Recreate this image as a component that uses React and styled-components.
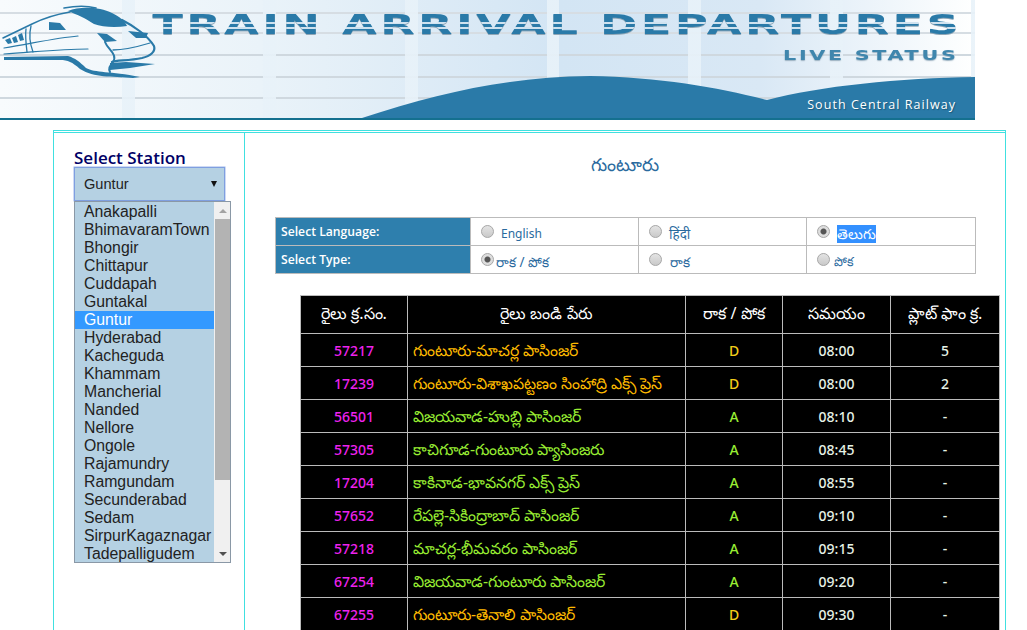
import React from "react";
import styled, { createGlobalStyle } from "styled-components";

const Global = createGlobalStyle`
  html, body { margin: 0; padding: 0; background: #fff; height: 630px; overflow: hidden; }
  #root { height: 630px; overflow: hidden; }
  * { box-sizing: border-box; }
`;

const Banner = styled.header`
  position: relative;
  width: 975px;
  height: 120px;
  border-bottom: 2px solid #14708f;
  overflow: hidden;
  background:
    repeating-linear-gradient(90deg, transparent 0 122px, rgba(232,242,249,.9) 122px 135px, transparent 135px 141.5px),
    linear-gradient(180deg, transparent 0 12px, #d6dde3 12px 14px, transparent 14px 32px, #d6dde3 32px 34px, transparent 34px 54px, #cfd8df 54px 56px, transparent 56px 76px, #cfd8df 76px 78px, transparent 78px 97px, #cfd8df 97px 99px, transparent 99px),
    linear-gradient(90deg, #f8fbfd 0, #eaf3f9 260px, #d3e5f4 560px, #d9e8f5 760px, #fbfdfe 955px, #fff 975px);
`;

const Wave = styled.svg`
  position: absolute;
  left: 0;
  top: 0;
  width: 975px;
  height: 118px;
`;

const Logo = styled.svg`
  position: absolute;
  left: 0;
  top: 0;
  width: 165px;
  height: 82px;
`;

const Titles = styled.div`
  position: relative;
  height: 118px;
  padding: 10px 17px 0 0;
  display: flex;
  flex-direction: column;
  align-items: flex-end;
`;

const MainTitle = styled.div`
  font: bold 26px/30px "DejaVu Sans", sans-serif;
  letter-spacing: 1.9px;
  margin-right: -4px;
  white-space: nowrap;
  color: transparent;
  background: linear-gradient(180deg, #2a7aa8 0 12px, #cfe2ef 12px 14px, #2a7aa8 14px 17px, #cfe2ef 17px 19px, #2a7aa8 19px);
  -webkit-background-clip: text;
  background-clip: text;
  filter: drop-shadow(0 1px 0 #8fa6b6);
  transform: scaleX(1.73);
  transform-origin: right center;
`;

const SubTitle = styled.div`
  font: bold 14px/16px "DejaVu Sans", sans-serif;
  letter-spacing: 1.8px;
  margin: 7px 0 0 0;
  color: #3f86ad;
  text-shadow: 0 1px 1px #9ab0c0;
  white-space: nowrap;
  transform: scaleX(1.48);
  transform-origin: right center;
`;

const Railway = styled.div`
  font: 500 12.5px/16px "Open Sans", sans-serif;
  letter-spacing: 1.05px;
  color: #fff;
  text-shadow: 1px 1px 1px #1c5878;
  margin: 34px 2px 0 0;
  white-space: nowrap;
`;

const Frame = styled.main`
  display: flex;
  width: 953px;
  height: 520px;
  margin: 10px 0 0 53px;
  border: 1px solid #40e0e0;
  border-top: 3px double #40e0e0;
  border-bottom: 0;
`;

const Side = styled.aside`
  width: 191px;
  flex: none;
  border-right: 1px solid #40e0e0;
  padding: 16px 0 0 20px;
`;

const SideLabel = styled.div`
  font: 600 17px/18px "Open Sans", sans-serif;
  color: #000066;
`;

const Dropdown = styled.div`
  display: flex;
  align-items: center;
  justify-content: space-between;
  width: 151px;
  height: 34px;
  padding: 0 7px 0 9px;
  background: #b5d1e3;
  border: 1px solid #7f9fe0;
  box-shadow: 0 0 0 .5px #9db6ea;
  font: 14.6px "Liberation Sans", sans-serif;
  color: #222;
`;

const Caret = styled.span`
  width: 0;
  height: 0;
  border-left: 3.5px solid transparent;
  border-right: 3.5px solid transparent;
  border-top: 6px solid #111;
`;

const Listbox = styled.div`
  display: flex;
  width: 157px;
  height: 362px;
  border: 1px solid #8a98a6;
  background: #b5d1e3;
  overflow: hidden;
`;

const Options = styled.div`
  width: 139px;
  flex: none;
  padding-top: 1px;
`;

const Option = styled.div`
  height: 18px;
  padding-left: 9px;
  font: 15.8px/18px "Liberation Sans", sans-serif;
  color: ${p => (p.$selected ? "#fff" : "#222")};
  background: ${p => (p.$selected ? "#3399ff" : "transparent")};
  white-space: nowrap;
`;

const ScrollBar = styled.div`
  width: 17px;
  flex: none;
  display: flex;
  flex-direction: column;
  background: #f0f0f0;
`;

const Arrow = styled.div`
  height: 17px;
  display: flex;
  align-items: center;
  justify-content: center;
  &::after {
    content: "";
    border-left: 4px solid transparent;
    border-right: 4px solid transparent;
    ${p => p.$up ? "border-bottom: 4px solid #a3a3a3;" : "border-top: 4px solid #505050;"}
  }
`;

const Thumb = styled.div`
  height: 261px;
  margin: 0 1px;
  background: #b3b3b3;
`;

const Track = styled.div`
  flex: 1;
`;

const Content = styled.section`
  flex: 1;
  padding-top: 19px;
`;

const Heading = styled.h2`
  margin: 0 0 41px;
  height: 24px;
  text-align: center;
  font: 400 17.8px/24px "Noto Sans", "DejaVu Sans", sans-serif;
  color: #2a6a9e;
`;

const OptionTable = styled.table`
  margin-left: 30px;
  width: 700px;
  height: 57px;
  border-collapse: collapse;
  table-layout: fixed;
  font: 12px "Noto Sans", "DejaVu Sans", sans-serif;
  color: #2a6a9e;
  td { border: 1px solid #bbb; height: 28px; padding: 0 0 0 10px; white-space: nowrap; }
`;

const LabelCell = styled.td`
  && {
    background: #2e7fad;
    color: #fff;
    padding-left: 5px;
    font: 600 12.2px "Open Sans", sans-serif;
  }
`;

const RadioWrap = styled.span`
  display: flex;
  align-items: center;
  gap: ${p => p.$gap}px;
`;

const Radio = styled.span`
  flex: none;
  width: 13px;
  height: 13px;
  border-radius: 50%;
  border: 1px solid #a8a8a8;
  background: ${p => p.$checked
    ? "radial-gradient(circle, #555 0 2.5px, #ddd 3.5px)"
    : "linear-gradient(180deg, #e4e4e4, #c9c9c9)"};
`;

const OptionText = styled.span`
  font-size: ${p => p.$size || 12}px;
  line-height: 18px;
  margin-top: 4px;
  ${p => p.$selected && "background: #3390ff; color: #fff;"}
`;

const DataWrap = styled.div`
  margin: 21px 0 0 55px;
`;

const DataTable = styled.table`
  width: 699px;
  border-collapse: collapse;
  table-layout: fixed;
  background: #000;
  text-align: center;
  font: 500 14px "Noto Sans", "DejaVu Sans", sans-serif;
  color: #e6f2e6;
  th, td { border: 1px solid #bbb; height: 33px; padding: 0; }
  th { height: 38px; font-weight: 400; font-size: 16px; color: #fff; }
`;

const NumCell = styled.td`
  color: #ee22ee;
`;

const NameCell = styled.td`
  && { text-align: left; padding: 3px 0 0 5px; font-weight: 400; white-space: nowrap; overflow: hidden; }
  color: ${p => (p.$dir === "D" ? "#ffbb00" : "#99ee33")};
  font-size: 15.7px;
`;

const DirCell = styled.td`
  color: ${p => (p.$dir === "D" ? "#f2cc1a" : "#99ee33")};
`;

const stations = ["Anakapalli","BhimavaramTown","Bhongir","Chittapur","Cuddapah","Guntakal","Guntur","Hyderabad","Kacheguda","Khammam","Mancherial","Nanded","Nellore","Ongole","Rajamundry","Ramgundam","Secunderabad","Sedam","SirpurKagaznagar","Tadepalligudem"];

const rows = [
  ["57217","గుంటూరు-మాచర్ల పాసింజర్","D","08:00","5"],
  ["17239","గుంటూరు-విశాఖపట్టణం సింహాద్రి ఎక్స్ ప్రెస్","D","08:00","2"],
  ["56501","విజయవాడ-హుబ్లి పాసింజర్","A","08:10","-"],
  ["57305","కాచిగూడ-గుంటూరు ప్యాసింజరు","A","08:45","-"],
  ["17204","కాకినాడ-భావనగర్ ఎక్స్ ప్రెస్","A","08:55","-"],
  ["57652","రేపల్లె-సికింద్రాబాద్ పాసింజర్","A","09:10","-"],
  ["57218","మాచర్ల-భీమవరం పాసింజర్","A","09:15","-"],
  ["67254","విజయవాడ-గుంటూరు పాసింజర్","A","09:20","-"],
  ["67255","గుంటూరు-తెనాలి పాసింజర్","D","09:30","-"],
];

const TrainLogo = () => (
  <Logo viewBox="0 0 165 82">
    <g fill="#2a7aa8">
      <path d="M68 11C80 6 100 7 112 13C120 17 125 21 127 26C115 28 102 27 94 24C85 18 78 15 68 11Z"/>
      <path d="M49 22L60 23L66 30L49 30Z"/>
      <path d="M5 40L8 44L12 43L10 38Z M12 38L14 43L18 42L16 36Z M18 35L20 41L24 40L22 33Z"/>
      <path d="M128 31L148 33L146 38L136 38Z"/>
      <path d="M97 33L107 34L117 41L105 42Z"/>
      <path d="M4 57L68 56C75 58 80 62 86 68C95 73 110 71 140 77L133 78C110 76 95 78 80 69C72 62 68 60 60 60L4 60Z"/>
      <path d="M110 63L126 62L155 64L130 68L110 70Z"/>
    </g>
    <g fill="none" stroke="#2a7aa8" strokeLinecap="round">
      <path strokeWidth="1.6" d="M3 38L32 24C46 17 58 14 70 12M64 8C75 6 88 6 96 8"/>
      <path strokeWidth="2.2" d="M122 20C134 26 148 36 154 46C156 52 150 56 142 58C128 61 116 60 112 62"/>
      <path strokeWidth="1.3" d="M31 26C29 34 30 44 33 52M26 29C25 36 26 44 27 52"/>
      <path strokeWidth="1.2" d="M4 48C30 44 55 38 78 36M4 54C35 52 60 49 88 49"/>
      <path strokeWidth="2" d="M105 42C108 50 118 54 113 62C110 66 108 68 110 72"/>
      <path strokeWidth="1.3" d="M113 50C125 50 140 46 150 43"/>
    </g>
  </Logo>
);

export default function App() {
  return (
    <>
      <Global />
      <Banner>
        <Wave viewBox="0 0 975 118">
          <path fill="#2a7aa8" d="M362 118C440 92 510 77 590 76C660 77 720 88 767 100C820 86 900 78 975 77L975 118Z"/>
        </Wave>
        <TrainLogo />
        <Titles>
          <MainTitle>TRAIN ARRIVAL DEPARTURES</MainTitle>
          <SubTitle>LIVE STATUS</SubTitle>
          <Railway>South Central Railway</Railway>
        </Titles>
      </Banner>
      <Frame>
        <Side>
          <SideLabel>Select Station</SideLabel>
          <Dropdown>Guntur<Caret /></Dropdown>
          <Listbox>
            <Options>
              {stations.map(s => <Option key={s} $selected={s === "Guntur"}>{s}</Option>)}
            </Options>
            <ScrollBar>
              <Arrow $up />
              <Thumb />
              <Track />
              <Arrow />
            </ScrollBar>
          </Listbox>
        </Side>
        <Content>
          <Heading>గుంటూరు</Heading>
          <OptionTable>
            <colgroup><col width="195" /><col width="168" /><col width="168" /><col width="169" /></colgroup>
            <tbody>
              <tr>
                <LabelCell>Select Language:</LabelCell>
                <td><RadioWrap $gap={7}><Radio /><OptionText $size={12}>English</OptionText></RadioWrap></td>
                <td><RadioWrap $gap={7}><Radio /><OptionText $size={13.5}>हिंदी</OptionText></RadioWrap></td>
                <td><RadioWrap $gap={7}><Radio $checked /><OptionText $size={13.8} $selected>తెలుగు</OptionText></RadioWrap></td>
              </tr>
              <tr>
                <LabelCell>Select Type:</LabelCell>
                <td><RadioWrap $gap={2}><Radio $checked /><OptionText $size={13.5}>రాక / పోక</OptionText></RadioWrap></td>
                <td><RadioWrap $gap={8}><Radio /><OptionText $size={13.5}>రాక</OptionText></RadioWrap></td>
                <td><RadioWrap $gap={4}><Radio /><OptionText $size={12.5}>పోక</OptionText></RadioWrap></td>
              </tr>
            </tbody>
          </OptionTable>
          <DataWrap>
            <DataTable>
              <colgroup><col width="107" /><col width="278" /><col width="97" /><col width="108" /><col width="109" /></colgroup>
              <thead>
                <tr>
                  <th>రైలు క్ర.సం.</th>
                  <th>రైలు బండి పేరు</th>
                  <th>రాక / పోక</th>
                  <th>సమయం</th>
                  <th>ప్లాట్ ఫాం క్ర.</th>
                </tr>
              </thead>
              <tbody>
                {rows.map(r => (
                  <tr key={r[0]}>
                    <NumCell>{r[0]}</NumCell>
                    <NameCell $dir={r[2]}>{r[1]}</NameCell>
                    <DirCell $dir={r[2]}>{r[2]}</DirCell>
                    <td>{r[3]}</td>
                    <td>{r[4]}</td>
                  </tr>
                ))}
              </tbody>
            </DataTable>
          </DataWrap>
        </Content>
      </Frame>
    </>
  );
}
